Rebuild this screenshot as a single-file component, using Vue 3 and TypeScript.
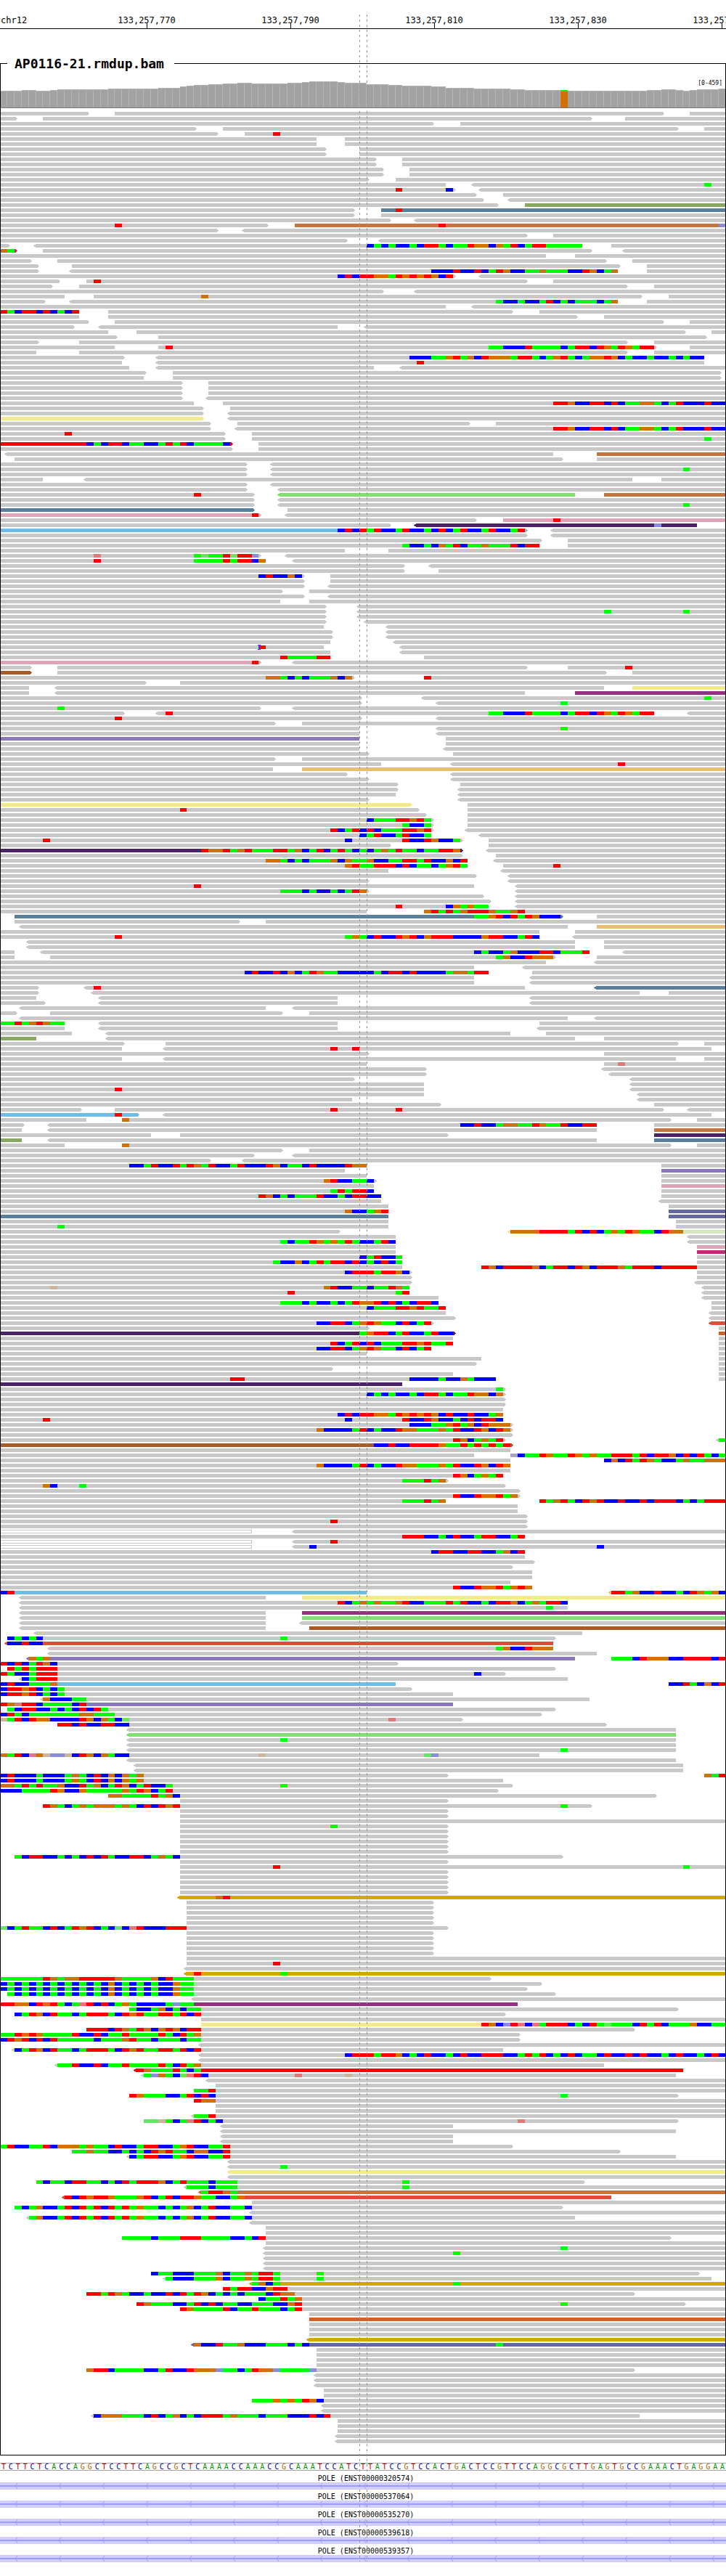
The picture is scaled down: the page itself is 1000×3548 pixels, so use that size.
<script setup lang="ts">
interface Shape {
  color: string
  d: string
}

const BASES = 101
const ROW_PITCH = 7
const READ_HEIGHT = 5
const FIRST_ROW = 154

const xOf = (base: number): number => Math.round((base * 1000) / BASES)

const ticks = [
  { x: 202, label: '133,257,770' },
  { x: 400, label: '133,257,790' },
  { x: 598, label: '133,257,810' },
  { x: 796, label: '133,257,830' },
  { x: 994, label: '133,257,850' },
]

const baseColors: Record<string, string> = {
  A: '#00ff00',
  C: '#0000ff',
  G: '#d17105',
  T: '#ff0000',
  a: '#64e664',
  c: '#8c8cdc',
  g: '#cbb59b',
  t: '#e07878',
}

const readColors: Record<string, string> = {
  '': '#c8c8c8',
  g: '#88a863',
  s: '#5a7f9a',
  b: '#c6753f',
  y: '#f2eb8a',
  r: '#ff0000',
  k: '#dda5b5',
  d: '#4b2468',
  l: '#6dbde6',
  n: '#7fe070',
  w: '#a65c24',
  p: '#8b78ba',
  m: '#933080',
  o: '#e8bc72',
  t: '#d94f38',
  z: '#d3a800',
  i: '#65689c',
  u: '#d06028',
  v: '#d8e6c0',
  x: '#c12c78',
  a: '#a8a8a8',
}

// One line per row of packed reads. "<5-9>k" is a read from base 5 to base 9 with
// strand arrows and a colour key; "12:ACG" lists mismatches from base 12; "*3" repeats.
const alignments = `
0-12> 16-92> 96-101
0-2> 6-82> 87-101
0-60> 64-101
0-27> 31-94> 98-101
0-30> 34-101 38:T
*2 0-44 48-101
*2 0-45> 50-101
*2 0-52> 56-101
*2 0-53> 57-101
0-51> 55-101
0-62 <66-101 98:A
0-63> <67-101 55:T 62:C
0-66> 70-101
0-67> <71-101
0-69> 73-101g
0-49> 53-101s 55:T
0-49> 53-101
0-54> <58-101
0-37> 41-101b 16:T 61:T 100:c
0-30> <34-101
0-73> 77-101
0-48> <53-101
0-1> <5-81 85-101 51:CACACCACTTACAATGGCGATCATTAAAAA
0-2>x 6-82> <87-101 0:GA
0-76 80-101
0-4> 8-84> 88-101
0-5> 10-86> 90-101
0-5> <10-86 90-101 60:CCCTCCTCATGCCAAGAAACCTGCAG
0-63> <67-101 47:CTCTTGGATGTGTGCT
0-8> 12-73> 77-101 13:T
0-7> 11-87> 91-101
0-53> <58-101
0-9 13-89> 93-101 28:G
0-6> <10-86 90-101 69:ACCACCATCACAAACAG
0-62 <66-101
0-11 15-71> 75-101 0:TACTTCTCACT
0-11 15-80> 84-101
0-12> 16-92> 96-101
0-10> <14-47 <51-101
0-15 19-95> 99-101
0-16> 22-98>
0-5> 11-87> 91-101
0-16 22-91> 96-101 23:T 68:AACCCTAAAACATTCTGATGATT
0-5 11-87> 91-101
0-17> <22-98 57:CCCAAGTAGCTGGGATTACAGTACAGGTGCACCACCACACC
0-17 <22-98 58:T
0-18 <22-52 <56-101
0-20> 24-100>
0-20 24-100>
*3 0-25> 29-101
0-25> <29-101
0-27 31-101 77:TTGCCTTCTCAAGGACATCCCTCC
0-28> 32-101
0-28> <32-101
0-28>y <32-101
0-29> 33-65> 69-101
0-29> <33-101 77:TTGCCTTCTCAAGGACATCCCTCC
0-31> 35-101 9:T
0-31> 35-101 98:A
0-32>r 36-101 12:CACTTCAACCATATCAAAAC
0-32> 36-101
<1-77 83-101b
2-78> 83-101
0-34> <38-101
0-34> <38-101 95:A
0-34> <38-101
0-6 <12-88 92-101
0-34> <38-101
0-34> <39-101
0-35> <39-80n 84-101b 27:T
0-35> <39-101
0-35> <39-101 95:A
0-35>s 40-101
0-36>k <40-101 35:T
0-66> 70-101k 77:T
0-54> <58-97d 91:c
0-73>l <77-101 47:CTCTATCCATCCACTCATCCATCCAT
0-73> <77-101
0-75> 79-101
0-75 79-101 56:ACCACGATCAAGAAATCTT
0-48 54-101
0-36> <40-101 13:t 27:AaAATaTTc
0-37 <41-101 13:T 27:AAAATATTCG
0-56> <60-101
0-56> 61-101
0-42> 46-101 36:CTCCGC
0-42> 46-101
0-42> <46-101
0-39> 43-101
0-42> <46-101
0-39 43-101
0-45> <50-101
0-45> <50-101 84:A 95:A
0-45> <50-101
0-45> <51-101
0-45 <54-101
*2 0-46> <54-101
0-46 <55-101
0-45 <56-101 36:T
0-46 <56-101
0-46 59-101 39:TAAAATT
0-36>k <41-101 35:T
0-4> 8-73> 79-101 87:T
0-4>w 8-84> 88-101
0-49> 59-101 37:GGACACAAAGCG 59:T
0-20> 25-101
0-4 <8-84 88-101y
0-4 <8-73 80-101m
0-50> <59-101 98:A
0-50> <61-101 78:A
0-36> <41-101 8:A
0-17> <22-91 <96-101 23:T 68:AACCCTAAAACATTCTGATGATT
0-50> <61-101 16:T
0-38> 42-101
0-50 <61-101 78:A
0-50 <61-101
0-50p 62-101
0-50 62-101
0-50 <62-101
0-51> 63-101
0-38> 42-101
0-53 <63-101 86:T
0-38 42-101o
0-48> <63-101
0-51> <63-101
0-55> 64-101
0-55> <64-101
0-55 <64-101
0-51> <64-101
0-57>y 65-101
0-58> 65-101 25:T
0-59> 65-101
0-60> 65-101 51:CAAATTGTA
0-60> 65-101 56:ACCA
0-60> <65-101 46:TCATCTCAAATTGT
0-60 <67-101 50:CATCCATCCA
0-64> 68-101 6:T 48:C 56:TCCTGCCA
0-54> 68-101
0-64>d <68-101 28:TGGTAGTAAATTAGCATCATACACAGATAACAATTG
0-64> 69-101
0-65 <69-101 37:GGACACAAAGCGAAGCCAATTATCCGCT
0-65 70-101 48:GTAATTTCTCAACAGTA 77:T
0-54 <70-101
0-66> <71-101
0-51> <71-101
0-66 <72-101 27:T
0-51> <72-101 39:AAACACCACATG
0-67> <72-101
0-68> <72-101
0-68 <72-101 55:T 62:CGAGAA
0-51 59-101 59:GTATAGTTTGAAGT
2-78>s 83-101 66:AAGTCTATGCCC
2-33> 37-101
<3-79 83-101o
0-75 80-101
0-75 <80-101 16:T 48:AGACTCCTGTCGTTTCCCCGTTCCATC
*2 <4-80 84-101
0-2 <6-82 <87-101 66:CACCAGCCCTTCAAAT
0-2 7-77> 83-101 69:AGCCTGGG
0-76 <83-101
0-66 <73-101
0-68 74-101 34:CTCCTCGCATGAACCCCCACTTCTCCCCAGGATT
*2 0-66 <74-101
0-5> <12-73 <83-101s 13:T
0-5> <13-89 93-101
0-5 <14-47 <74-101
0-6> <14-47 <74-101
<3-37 <41-101
0-2> 7-39> 43-101
<3-79 <83-101
0-9 <14-47 75-101 0:AATAGTGAA
0-9 <14-47 <75-101
0-10 <15-71 76-101
0-5g <15-80 84-101
0-17> 23-94> 98-101
0-17 <23-99 46:T 49:T
0-51> 84-101
0-17 <23-94 98-101
0-51 84-101 86:t
0-59> <84-101
0-59> <85-101
0-49> <88-101
0-59 <88-101
0-59 <88-101 16:T
0-59 <89-101
0-49 <89-101
0-61> 91-101
0-11> 16-92> <96-101 46:T 55:T
0-19>l <23-99 16:T
0-12 17-93> 97-101 17:G
0-3> <7-83 91-101 64:CCTCCAGGAATGAATCCTT
0-3 <7-83 91-101b
0-21 25-62> 91-101d
0-3g <7-83 91-101s
0-9 17-93> 97-101 17:G
0-39> 43-101
0-35> <41-101
0-29> <34-101
0-51 92-101 18:CCATCCTATGATCCATCCCTGCAACTCCCCTGG
0-48 92-101p
0-51 92-101
0-52> 92-101 45:GTCCAAC
0-52 92-101k
0-52 92-101 46:ATATTC
0-53 92-101 36:TGCACAAATCCACTTCC
0-53 <92-101
0-54 93-101
0-54 93-101i 48:GCCAGT
0-54s 93-101i
0-54 94-101
0-54 94-101 8:A
0-47> <71-101v 71:GGGGTTTTATCTCAGATGAACTGG
0-55 <96-101
0-55 <96-101 39:ACAATGAGATACCATC
0-55 97-101k
0-55 97-101x
0-56 97-101 50:CATCCA
0-56 97-101 38:ACCGCATATTCTCACTCA
0-56 67-101 67:TGCTTTTGCATTCTGCTTTGATTTCTTTTT
0-57> 97-101 48:CTTTATTGC
0-57> 97-101
0-57> <97-101
0-57 <98-101 7:g 45:GTCCAACAATGA
0-57 <98-101 40:T 55:AT
0-61 <98-101
0-61 99-101 39:AAACACCACATGGTCTCACTTC
0-62 99-101 51:CAAATTGTAAT
0-62 <99-101
0-63> <99-101
0-60> <99-101t 44:CCTTCAGTGAACTCAT
0-51> 100-101
0-63>d 100-101u 50:AGTTCATCCATCC
0-63 100-101
0-63 100-101 46:TCATCTCAAATTGTAAT
0-60 100-101 44:CCTTCAGTGAACTCAT
0-51 100-101
0-67 100-101
0-66> 100-101
0-46> 100-101
0-63 100-101
0-69 100-101 32:TT 57:CCCCACCGACCC
0-56d
0-70> 69:A
0-70> 51:CACACCACTTACAATGGCG
*2 0-70>
0-70
0-70 47:CTCTTGGATGTGTGCTCCTCCAG
0-70 6:T 48:C 56:TCCTGCCACTCTTC
0-71> 57:CCCAAGTAGCTGGG
0-71> 44:GCCCCATCACCTGGAAAGATCCTGCTG
0-71>
0-70> <100-101 63:TGCAGAT 100:A
0-71>w 52:CCTCCTTTTGAATATATAT
0-71
0-66 71-101a 72:CAATGAATGAGAATTTATCTTGCTCTACA
0-71 84:CGCTATGACCAGAAGGG
0-71 44:GCCCCATCACCTGGAAAGATCCTGCTG
0-71
0-70 63:TGCAGAT
0-62> 56:AAATAG
0-70> 6:GC 11:A
0-72>
0-72> 63:TCCTGGTAG
0-62 56:AAATAG 75:TAGTACTGTCCTCCTCTTTCACATTT
*2 0-72
0-73>
0-73> 46:T
0-73>
0-35Q <41-101
0-73 56:TTTCCACTCCATTCCAT
0-35Q <41-101 46:T
0-35Q <41-101 43:C 83:C
0-73 60:CTTCCTTCCAGCT
0-73
0-74>
0-71>
*2 0-74
0-71
0-74 63:TCCTGGTAGTG
0-51l 0:CT <85-101o 85:TTAGCCTCCACTGAGC
<3-37 42-101y
<3-79 47:TCAGAGAAGTCCAAATATCCACTTGCAGATTC
<3-79 76:A
<3-37 42-101m
<3-37 42-101n
<3-37 <42-101
<3-37 43-101w
<5-81
1-77> 1:CACAC 39:A
<1-77t 1:CCTCC
<7-77 69:AGCCTGGG
<7-83
<4-80p 4:GAG 85:AAACTGGGCCTTTTCT
0-55> 0:TCTCATGC
1-77> 1:TATATTT
0-70> 0:TACCATTT 66:C
<3-79 3:CATTT
0-55l 0:CTCCAAAG 93:CCTACGCT
0-57> 0:CTTGTCACA
0-63 0:CTTGTCACA
<6-82 6:GCCCAA
0-63p 0:TGtTTCAAAACT
1-77> 1:ACTTCCACACTCTA
0-75> 0:CTACAAAAAAAGGAAA
0-64> 0:gATCTGGCCCCTGCGACa 54:t
8-84> 8:TTCTCCTTCC
<18-94
<18-94n
<18-94 39:A
<18-94
<18-94 78:A
0-75 0:GATCtGgccgCTGCGACC 36:g 59:ac
<18-94
*2 <19-95
0-62> 0:CTCCCACCCAGACTCGCGAG 98:GAT
0-70 0:CTCCCACCCAGACTCGCGAG
0-71> 0:GGATATAAGCCTAGCATGCATCCA 39:A
0-69> 0:CCCAAAATGCCGAAAAAGATGCAT
15-91> 15:GGAAAATAGC
25-62>
6-82> 6:TGACAGAGGGAGACTCTGT 78:A
*2 25-62>
25-101
25-62> 46:A
*5 25-62>
2-78> 2:ACTTCCACACTCTACCTTCAGAC
25-62>
25-101 38:T 95:A
*5 25-62>
<25-101z 30:GT
*5 26-60>
0-62> 0:aCATAACTCATGTCACaCtTCCCTTT
*5 26-60>
26-101
26-101 38:T
<26-101
<26-101z 27:T 39:A
0-68> 0:AAAAAATGAGGTTTTTGAAAAGCTAAA
0-75> 0:CACACACACACACACGCACACACCGAA
0-73> 0:CACACACACACACACGCACACACCGAA
1-77> 1:ACACACACACACACGCACACACCGAA
<27-101
0-72m 0:TTGGCTGTACAtTCTCAGACCCCAcAA
18-94> 18:ACCAGCACAA
2-70> 2:CATGCTAACATTTACTGTAATTATCT
28-101
28-101y 67:TGCcTtCtATTTCACTAaAAACTATCAAAGCCAA
12-88> 12:TTTCTGATGCGTGCTT
0-72> 0:AATGTGAAAATCCTCAATAAAATACTAG
0-72> 0:CTGTCTCTAAAAACAAAGTAACAAACAA
<28-101
<2-70 2:CATGCTAACATTTACTGTAATTATCT
<28-101 48:CTTTATTGCACTCCACTCCTTTCCATATCACTCAACTCCTCTCCACTCCACTC
<28-101
<8-84 8:AATCCTCAATAAAATACTAG
<19-95r 19:TGAAATACA
<20-94 20:AcGACatTC 41:t 48:g
<29-101
30-101
27-101 27:AAT
18-94> 18:TGAAACCATCTC 78:A
27-101 27:TGG
*2 30-101
<27-101 27:AAT
20-94> 20:aagACAtTCAC 72:t
<31-63
<31-94
*2 <31-63
0-71> 0:ATCCAATCGGGAGAACTCCATTCCAGTCCAAT
10-86> 10:AAGAACCACACTGTAACGGCCT
<18-94 18:CATTCCAGTCCAAT
<32-101
<32-101 39:A
<32-101y
<32-101
5-81> 5:ACAACTTAACACTATTTGCATAAACAAA 56:A
<26-101 26:AAACAAA 56:A
<28-101b 28:ATTGA
<9-85t 9:TCTGTTGAAAGTCATCTTGAACCAG
35-101
2-78> 2:ACAGCCATCTATCTATAGAACACAGCATCCAAC
<35-101
<4-80 4:AGCCATCTATCTATAGAACACAGCATCCAAC
<35-101
*2 37-101
17-93> 17:AAAACAAATTTAAAACCACT
37-101
<37-101 78:A
<37-101 63:A
*3 <37-101
21-97> 21:CAACCCAAAGCAAGATTA 44:A
<23-99 23:ACCCAAAGCAAGATTA 44:A
<35-101z 35:AGCA 63:A
31-101 31:TATTCCGTT
12-88> 12:TTATGACCACCTCTATGCACACAAACTGG
36-101 36:CAATAG
19-95> 19:TGAAACCATCTCAACCAAACCGT 78:A
25-101 25:TGAAAATCAATAAACAT
43-101
43-101u
*3 43-101
<43-101z
<27-101i 27:GCCTAAGCCCAAACAC 69:A
*4 44-101
12-88> 12:GTTCAAAACCATCCTGGGcAACATGGcAAAAc
*3 <44-101
*2 45-101
35-101 35:AAAGAGATGC
*2 <45-101
<13-89 13:CGGGAAACTCAGCACTTTAGAAACAAACCCTCT
*3 47-101
*2 <47-101
`

const rows = alignments
  .trim()
  .split('\n')
  .flatMap((line) => {
    const repeat = /^\*(\d+) (.*)$/.exec(line)
    return repeat ? Array<string>(Number(repeat[1])).fill(repeat[2]) : [line]
  })

const reads = new Map<string, string>()
const mismatches = new Map<string, string>()
const outlines: { x: number; y: number; w: number }[] = []

const append = (target: Map<string, string>, color: string, d: string): void => {
  target.set(color, (target.get(color) ?? '') + d)
}

const block = (x1: number, x2: number, y: number): string => `M${x1} ${y}H${x2}v${READ_HEIGHT}H${x1}z`

rows.forEach((row, index) => {
  const y = FIRST_ROW + index * ROW_PITCH
  for (const token of row.split(' ')) {
    const read = /^(<?)(\d+)-(\d+)(>?)([a-zQ]?)$/.exec(token)
    if (read) {
      const x1 = xOf(Number(read[2]))
      const x2 = xOf(Number(read[3]))
      if (read[5] === 'Q') {
        outlines.push({ x: x1, y, w: x2 - x1 })
        continue
      }
      const color = readColors[read[5]]
      append(reads, color, block(x1, x2, y))
      if (read[1]) append(reads, color, `M${x1} ${y}l-3 1v1h-1v1h1v1l3 1z`)
      if (read[4]) append(reads, color, `M${x2} ${y}l3 1v1h1v1h-1v1l-3 1z`)
      continue
    }
    const [start, letters] = token.split(':')
    ;[...letters].forEach((letter, offset) => {
      const base = Number(start) + offset
      append(mismatches, baseColors[letter], block(xOf(base), xOf(base + 1), y))
    })
  }
})

const toShapes = (source: Map<string, string>): Shape[] => [...source].map(([color, d]) => ({ color, d }))
const readShapes = toShapes(reads)
const mismatchShapes = toShapes(mismatches)

// Last base and top edge of every run of equal depth.
const depthRuns: [number, number][] = [
  [3, 125], [5, 124], [7, 125], [8, 124], [15, 123], [22, 122], [25, 121], [26, 119], [27, 118],
  [29, 117], [31, 116], [33, 115], [35, 114], [40, 115], [42, 114], [43, 113], [47, 112], [48, 113],
  [51, 114], [54, 116], [56, 117], [60, 118], [62, 119], [66, 121], [71, 122], [73, 123], [79, 124],
  [90, 125], [92, 124], [94, 123], [95, 124], [96, 125], [97, 124], [100, 123], [101, 122],
]
const depth = Array.from({ length: BASES }, (_, base) => {
  const top = (depthRuns.find(([end]) => base < end) ?? [0, 125])[1]
  const x = xOf(base)
  return { base, x, top, w: xOf(base + 1) - x }
})

const reference = [
  ...('TCTTCTCACCAGGCTCCTTCAGCCGCTCAAAACCAAACCGCAAATCCATCT' +
    'TATCCGTCCACTGACTCCGTTCCAGGCGCTTGAGTGCCGAAACTGAGGAA'),
]

const transcripts = [
  'ENST00000320574',
  'ENST00000537064',
  'ENST00000535270',
  'ENST00000539618',
  'ENST00000539357',
]
const strandMarks = Array.from({ length: 17 }, (_, i) => `M${24 + i * 60} 1l-3 4l3 4`).join('')
</script>

<template>
  <main class="browser">
    <svg class="ruler" viewBox="0 0 1000 76" role="img" aria-label="Genomic position">
      <text x="1" y="32">chr12</text>
      <g v-for="tick in ticks" :key="tick.x">
        <text :x="tick.x" y="32" text-anchor="middle">{{ tick.label }}</text>
        <rect :x="tick.x" y="32" width="1" height="7" />
      </g>
      <rect x="0" y="39" width="1000" height="1" />
    </svg>

    <fieldset class="track">
      <legend class="track-name">AP0116-21.rmdup.bam</legend>
      <svg class="plot" viewBox="1 99 998 51" shape-rendering="crispEdges">
        <g v-for="bar in depth" :key="bar.base">
          <rect :x="bar.x" :y="bar.top" :width="bar.w" :height="148 - bar.top" fill="#b4b4b4" />
          <rect :x="bar.x" :y="bar.top + 1" :width="bar.w - 1" :height="147 - bar.top" fill="#a2a2a2" />
        </g>
        <rect :x="xOf(78)" y="124" width="10" height="2" fill="#00ff00" />
        <rect :x="xOf(78)" y="126" width="10" height="22" fill="#d17105" />
        <rect x="0" y="148" width="1000" height="1" fill="#787878" />
        <text class="range" x="995" y="117" text-anchor="end">[0-459]</text>
      </svg>
      <svg class="plot" viewBox="1 150 998 3231" shape-rendering="crispEdges">
        <path v-for="shape in readShapes" :key="shape.color" :d="shape.d" :fill="shape.color" />
        <g v-for="box in outlines" :key="box.y">
          <rect :x="box.x" :y="box.y" :width="box.w" height="5" fill="#c8c8c8" />
          <rect :x="box.x" :y="box.y + 1" :width="box.w - 1" height="3" fill="#ffffff" />
        </g>
        <path v-for="shape in mismatchShapes" :key="shape.color" :d="shape.d" :fill="shape.color" />
        <path d="M355 888h4v1h-1v5h1v1h-4v-1h1v-5h-1z" fill="#7a1fe0" />
      </svg>
    </fieldset>

    <div class="sequence">
      <span v-for="(letter, i) in reference" :key="i" :class="['base', letter]">{{ letter }}</span>
    </div>

    <section class="genes">
      <div v-for="id in transcripts" :key="id" class="gene">
        <p class="gene-name">POLE ({{ id }})</p>
        <svg class="gene-body" viewBox="0 0 1000 10">
          <rect width="1000" height="10" fill="#d2ceff" />
          <rect y="4" width="1000" height="2" fill="#9c9cff" />
          <path :d="strandMarks" fill="none" stroke="#9c9cff" />
        </svg>
      </div>
    </section>

    <div class="guide guide-left"></div>
    <div class="guide guide-right"></div>
  </main>
</template>

<style>
body {
  margin: 0;
  background: #ffffff;
}
</style>

<style scoped>
.browser {
  position: relative;
  overflow: hidden;
  padding-bottom: 19px;
  color: #000000;
  font-family: "DejaVu Sans Mono", "Liberation Mono", monospace;
}

.ruler,
.plot,
.gene-body {
  display: block;
  width: 100%;
  height: auto;
}

.ruler {
  font-size: 12px;
}

.track {
  min-width: 0;
  margin: 0;
  padding: 0;
  border: 1px solid #000000;
}

.track-name {
  margin-left: 9px;
  padding: 0 14px 0 10px;
  font-size: 18px;
  font-weight: bold;
  line-height: 23px;
}

.range {
  font-size: 8px;
}

.sequence {
  display: grid;
  grid-template-columns: repeat(101, minmax(0, 1fr));
  margin-top: 10px;
  border: solid #a6a6a6;
  border-width: 1px 0;
  font-size: 10px;
  line-height: 9px;
  text-align: center;
}

.base {
  height: 9px;
}

.A {
  color: #009600;
}

.C {
  color: #000096;
}

.G {
  color: #b46405;
}

.T {
  color: #b40000;
}

.genes {
  margin-top: 1px;
}

.gene-name {
  margin: 0;
  padding: 4px 0 0 8px;
  font-size: 10px;
  line-height: 11px;
  text-align: center;
}

.guide {
  position: absolute;
  top: 20px;
  bottom: 20px;
  width: 1px;
  background: repeating-linear-gradient(to bottom, #969696 0 3px, transparent 3px 7px);
}

.guide-left {
  left: 49.5%;
}

.guide-right {
  left: 50.5%;
}
</style>
